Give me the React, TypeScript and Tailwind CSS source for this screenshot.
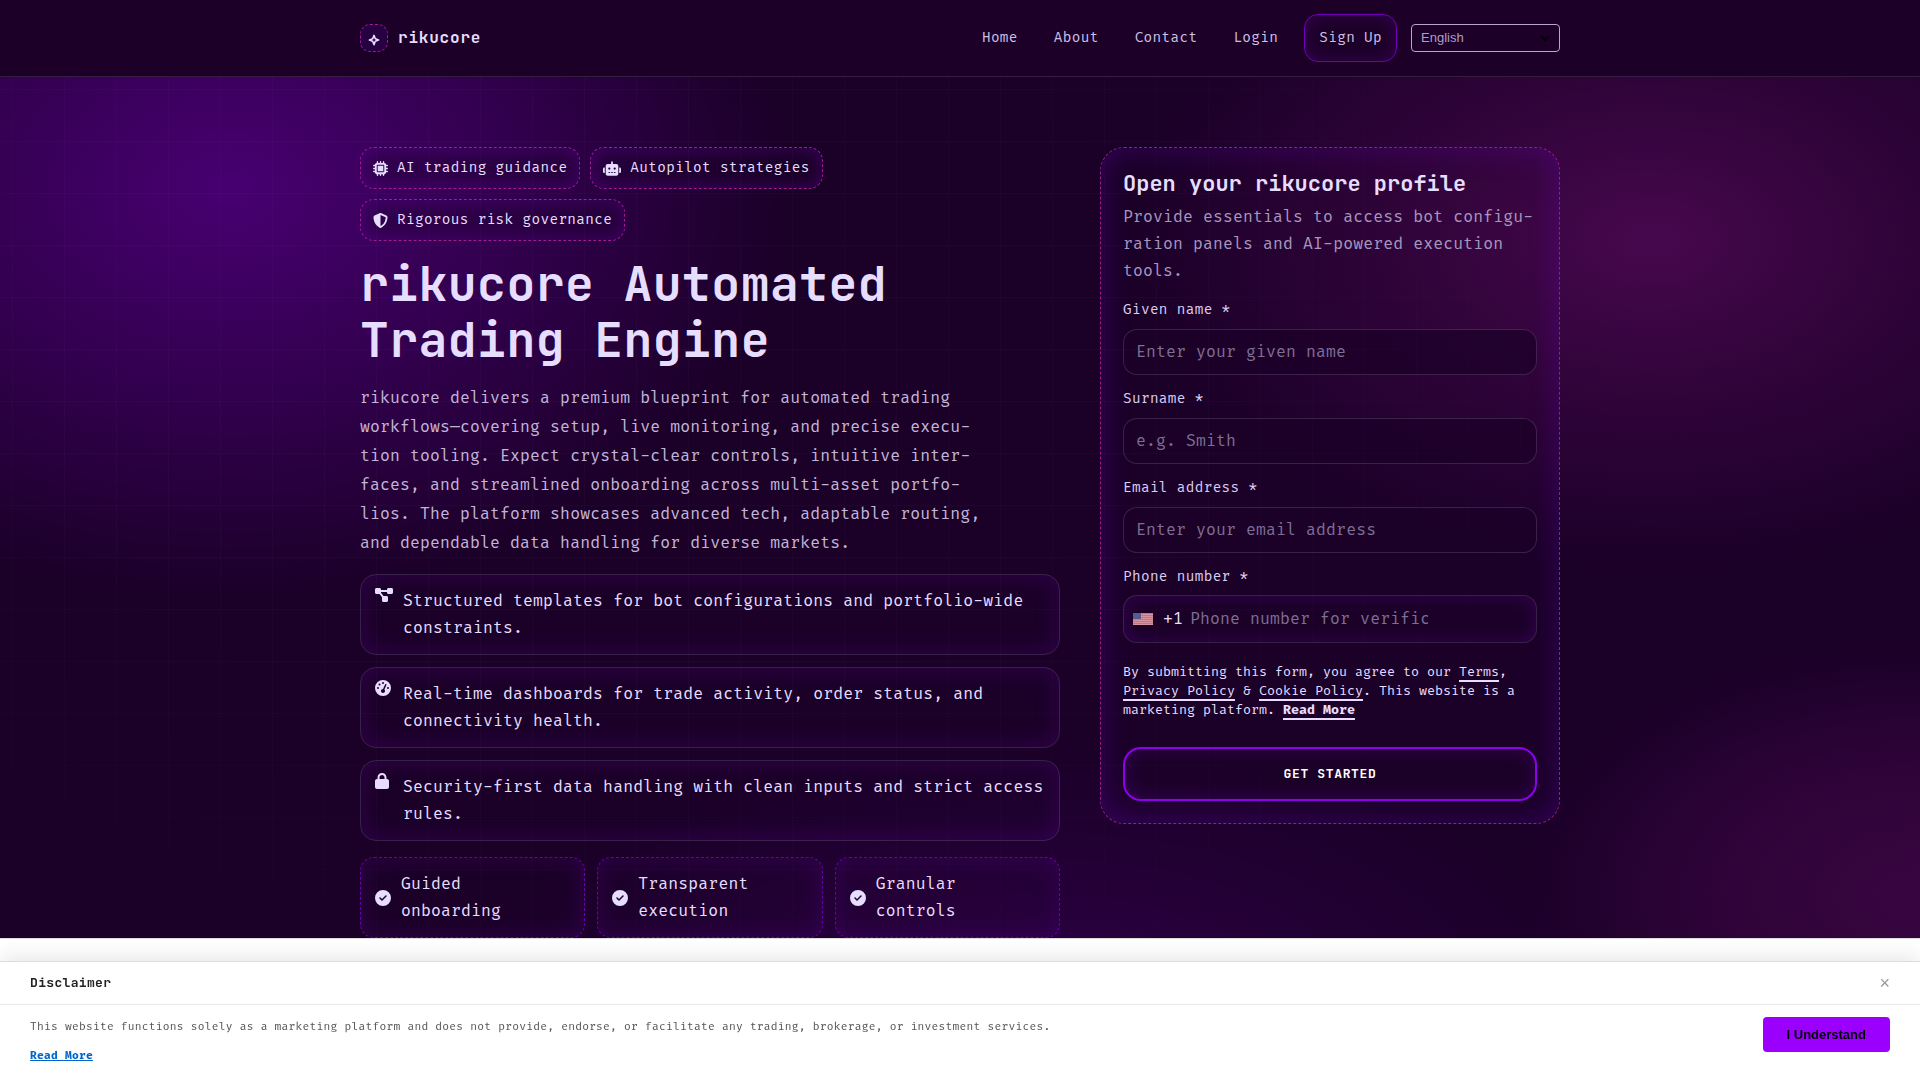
import React, { useState } from 'react';
import {
  FaCircleCheck,
  FaDiagramProject,
  FaGaugeHigh,
  FaLock,
  FaMicrochip,
  FaRobot,
  FaShieldHalved,
} from 'react-icons/fa6';

const navLinks = ['Home', 'About', 'Contact', 'Login'];

const chips = [
  { label: 'AI trading guidance', icon: FaMicrochip, iconSize: 'w-[15px] h-[15px]' },
  { label: 'Autopilot strategies', icon: FaRobot, iconSize: 'w-[18px] h-[15px]' },
  { label: 'Rigorous risk governance', icon: FaShieldHalved, iconSize: 'w-[15px] h-[15px]' },
];

const features = [
  {
    text: 'Structured templates for bot configurations and portfolio-wide constraints.',
    icon: FaDiagramProject,
    iconSize: 'w-[18px] h-4',
  },
  {
    text: 'Real-time dashboards for trade activity, order status, and connectivity health.',
    icon: FaGaugeHigh,
    iconSize: 'w-4 h-4',
  },
  {
    text: 'Security-first data handling with clean inputs and strict access rules.',
    icon: FaLock,
    iconSize: 'w-[14px] h-4',
  },
];

const perks = ['Guided onboarding', 'Transparent execution', 'Granular controls'];

const fields = [
  { name: 'firstName', label: 'Given name *', type: 'text', placeholder: 'Enter your given name' },
  { name: 'lastName', label: 'Surname *', type: 'text', placeholder: 'e.g. Smith' },
  { name: 'email', label: 'Email address *', type: 'email', placeholder: 'Enter your email address' },
];

const UsFlag: React.FC = () => (
  <svg viewBox="0 0 20 12" className="h-3 w-5" aria-hidden="true">
    <rect width="20" height="12" fill="#d9929f" />
    {[0, 2, 4, 6, 8, 10].map(y => (
      <rect key={y} y={y} width="20" height="1" fill="#cf707c" />
    ))}
    <rect width="8" height="6" fill="#565a8c" />
  </svg>
);

const StarMark: React.FC = () => (
  <svg viewBox="0 0 12 12" className="size-3 mt-[3px]" fill="none" stroke="currentColor" strokeWidth="1.6" strokeLinejoin="round" aria-hidden="true">
    <path d="M6 1.4L7.3 4.7L10.6 6L7.3 7.3L6 10.6L4.7 7.3L1.4 6L4.7 4.7Z" />
  </svg>
);

const Header: React.FC = () => {
  const [language, setLanguage] = useState('en');

  return (
    <header className="border-b border-[#351d40] bg-[#1c0027]">
      <div className="max-w-[1200px] h-19 mx-auto flex items-center justify-between">
        <a href="#" className="flex items-center gap-[10px]">
          <span className="size-7 flex items-center justify-center rounded-[10px] border border-dashed border-[#a31a9b] bg-[#260040]">
            <StarMark />
          </span>
          <span className="font-['JetBrains_Mono',monospace] font-bold tracking-wider">rikucore</span>
        </a>

        <div className="flex items-center">
          <nav className="flex items-center gap-[6px] text-sm tracking-wide text-[#cdbfe6]">
            {navLinks.map(link => (
              <a key={link} href="#" className="px-[15px]">{link}</a>
            ))}
            <a
              href="#"
              className="ml-[5px] h-12 px-[14px] flex items-center rounded-[14px] border border-[#7200b8] shadow-[inset_0_0_18px_rgba(157,0,255,0.2)]"
            >
              Sign Up
            </a>
          </nav>
          <div className="relative ml-[14px]">
            <select
              aria-label="Language"
              value={language}
              onChange={e => setLanguage(e.target.value)}
              className="block appearance-none w-[149px] h-7 px-[9px] rounded border border-[#b5a6cf] bg-transparent font-['Liberation_Sans',Arial,sans-serif] text-[13px] tracking-normal text-[#ad9fc6]"
            >
              <option value="en">English</option>
            </select>
            <svg viewBox="0 0 12 12" className="absolute right-[9px] top-2 size-3 pointer-events-none" fill="none" stroke="#050008" strokeWidth="2">
              <path d="M2 4l4 4 4-4" />
            </svg>
          </div>
        </div>
      </div>
    </header>
  );
};

const HeroCopy: React.FC = () => (
  <div>
    <div className="max-w-[600px] flex flex-wrap gap-[10px]">
      {chips.map(({ label, icon: Icon, iconSize }) => (
        <span
          key={label}
          className="h-[42px] px-3 flex items-center gap-[9px] rounded-[14px] border border-dashed border-[#a31a9b] bg-[#1b0028]/30 text-sm tracking-wide shadow-[inset_0_0_18px_rgba(157,0,255,0.25)]"
        >
          <Icon className={iconSize} />
          {label}
        </span>
      ))}
    </div>

    <h1 className="mt-[15px] font-['JetBrains_Mono',monospace] text-5xl leading-14 font-bold tracking-[0.01em]">
      rikucore Automated
      <br />
      Trading Engine
    </h1>
    <p className="mt-4 max-w-[630px] leading-[29px] text-[#c2b5da]">
      rikucore delivers a premium blueprint for automated trading workflows—covering setup, live monitoring, and
      precise execu&shy;tion tooling. Expect crystal-clear controls, intuitive inter&shy;faces, and streamlined
      onboarding across multi-asset portfo&shy;lios. The platform showcases advanced tech, adaptable routing, and
      dependable data handling for diverse markets.
    </p>

    <ul className="mt-4 flex flex-col gap-3">
      {features.map(({ text, icon: Icon, iconSize }) => (
        <li
          key={text}
          className="flex gap-[10px] px-[14px] py-3 rounded-2xl border border-[#e6ddff]/15 shadow-[inset_0_0_24px_rgba(157,0,255,0.17)]"
        >
          <span className="w-[18px] shrink-0">
            <Icon className={iconSize} />
          </span>
          <span className="pt-px leading-[27px]">{text}</span>
        </li>
      ))}
    </ul>

    <ul className="mt-4 grid grid-cols-3 gap-3">
      {perks.map(perk => (
        <li
          key={perk}
          className="flex items-center gap-[10px] px-[14px] pt-[13px] pb-3 rounded-[14px] border border-dashed border-[#6a00ad] leading-[27px] shadow-[inset_0_0_24px_rgba(157,0,255,0.15)]"
        >
          <FaCircleCheck className="size-4 shrink-0" />
          {perk}
        </li>
      ))}
    </ul>
  </div>
);

const ProfileForm: React.FC = () => {
  const [formData, setFormData] = useState<Record<string, string>>({
    firstName: '',
    lastName: '',
    email: '',
    phone: '',
  });

  const handleChange = (e: React.ChangeEvent<HTMLInputElement>) => {
    const { name, value } = e.target;
    setFormData(prev => ({ ...prev, [name]: value }));
  };

  const linkClass = 'border-b-2 border-[#e6ddff]';

  return (
    <form
      onSubmit={e => e.preventDefault()}
      className="p-[22px] rounded-3xl border border-dashed border-[#9c1a8e] shadow-[inset_0_0_30px_rgba(130,0,255,0.24)]"
    >
      <h2 className="font-['JetBrains_Mono',monospace] text-[22px] leading-7 font-bold tracking-normal">Open your rikucore profile</h2>
      <p className="mt-[6px] leading-[27px] text-[#a696be]">
        Provide essentials to access bot configu&shy;ration panels and AI-powered execution tools.
      </p>

      <div className="mt-[13px] flex flex-col gap-3">
        {fields.map(field => (
          <div key={field.name}>
            <label htmlFor={field.name} className="block text-sm leading-6 tracking-wide text-[#d9cdf2]">{field.label}</label>
            <input
              id={field.name}
              type={field.type}
              name={field.name}
              placeholder={field.placeholder}
              value={formData[field.name]}
              onChange={handleChange}
              className="mt-[7px] block w-full h-[46px] px-3 rounded-[14px] border border-[#e6ddff]/15 bg-[#1b0028]/70 placeholder:text-[#7d6e94]"
            />
          </div>
        ))}
        <div>
          <label htmlFor="phone" className="block text-sm leading-6 tracking-wide text-[#d9cdf2]">Phone number *</label>
          <div className="mt-[6px] h-12 pl-[9px] flex items-center rounded-[14px] border border-[#e6ddff]/15 bg-[#1b0028]/70 shadow-[inset_0_0_18px_rgba(157,0,255,0.2)]">
            <UsFlag />
            <span className="ml-[10px] mr-[7px]">+1</span>
            <input
              id="phone"
              type="tel"
              name="phone"
              placeholder="Phone number for verification"
              value={formData.phone}
              onChange={handleChange}
              className="w-[238px] h-full placeholder:text-[#7d6e94]"
            />
          </div>
        </div>
      </div>

      <p className="mt-5 text-[13px] leading-[19px] tracking-normal">
        By submitting this form, you agree to our <a href="#" className={linkClass}>Terms</a>,{' '}
        <a href="#" className={linkClass}>Privacy Policy</a> &amp; <a href="#" className={linkClass}>Cookie Policy</a>. This
        website is a marketing platform. <a href="#" className={`${linkClass} font-bold`}>Read More</a>
      </p>

      <button
        type="submit"
        className="mt-[27px] block w-full h-[54px] rounded-[18px] border-2 border-[#8f00ea] font-['JetBrains_Mono',monospace] text-[13px] font-bold tracking-wider text-white shadow-[inset_0_0_18px_rgba(157,0,255,0.2)]"
      >
        GET STARTED
      </button>
    </form>
  );
};

const Disclaimer: React.FC<{ onClose: () => void }> = ({ onClose }) => (
  <div className="fixed inset-x-0 bottom-0 border-t border-[#dddddd] bg-white shadow-[0_-4px_20px_rgba(0,0,0,0.1)]">
    <div className="h-[43px] px-[30px] flex items-center justify-between border-b border-[#eaeaea]">
      <h3 className="font-['JetBrains_Mono',monospace] text-[13px] font-bold tracking-wide text-[#222222]">Disclaimer</h3>
      <button type="button" aria-label="Close" onClick={onClose} className="font-['Liberation_Sans',Arial,sans-serif] text-lg leading-none tracking-normal text-[#999999]">
        ×
      </button>
    </div>
    <div className="px-[30px] pt-3 pb-[15px] flex items-start justify-between">
      <div className="text-[11px] leading-[18px] tracking-[0.02em] text-[#555555]">
        <p className="pt-px">
          This website functions solely as a marketing platform and does not provide, endorse, or facilitate any
          trading, brokerage, or investment services.
        </p>
        <a href="#" className="mt-[11px] block font-bold text-[#0066cc] underline">Read More</a>
      </div>
      <button
        type="button"
        onClick={onClose}
        className="h-[35px] px-6 rounded bg-[#9b00ff] font-['Liberation_Sans',Arial,sans-serif] text-[13px] font-bold tracking-normal text-black"
      >
        I Understand
      </button>
    </div>
  </div>
);

const App: React.FC = () => {
  const [showDisclaimer, setShowDisclaimer] = useState(true);

  return (
    <div className="bg-white font-['Fira_Code','DejaVu_Sans_Mono',monospace] text-base tracking-[0.01em] text-[#e6ddff]">
      <Header />

      <main className="relative pt-[70px] bg-[#1b0028] bg-[radial-gradient(560px_410px_at_12%_13%,rgba(157,0,255,0.34),rgba(157,0,255,0.18)_50%,transparent),radial-gradient(520px_330px_at_86%_19%,rgba(208,32,192,0.24),rgba(208,32,192,0.11)_50%,transparent),radial-gradient(400px_250px_at_100%_95%,rgba(208,32,192,0.16),rgba(208,32,192,0.11)_50%,transparent),radial-gradient(560px_240px_at_54%_106%,rgba(157,0,255,0.13),transparent)]">
        <div className="absolute inset-0 pointer-events-none bg-[linear-gradient(90deg,rgba(230,221,255,0.022)_1px,transparent_1px),linear-gradient(rgba(230,221,255,0.022)_1px,transparent_1px)] bg-size-[52px_52px] bg-position-[12px_12px] [mask-image:radial-gradient(1300px_900px_at_30%_30%,#000_40%,transparent_90%)]" />
        <div className="max-w-[1200px] mx-auto grid grid-cols-[700px_1fr] items-start gap-10">
          <HeroCopy />
          <ProfileForm />
        </div>
      </main>

      <div className="h-[142px] border-t border-[#dddddd]" />

      {showDisclaimer && <Disclaimer onClose={() => setShowDisclaimer(false)} />}
    </div>
  );
};

export default App;
